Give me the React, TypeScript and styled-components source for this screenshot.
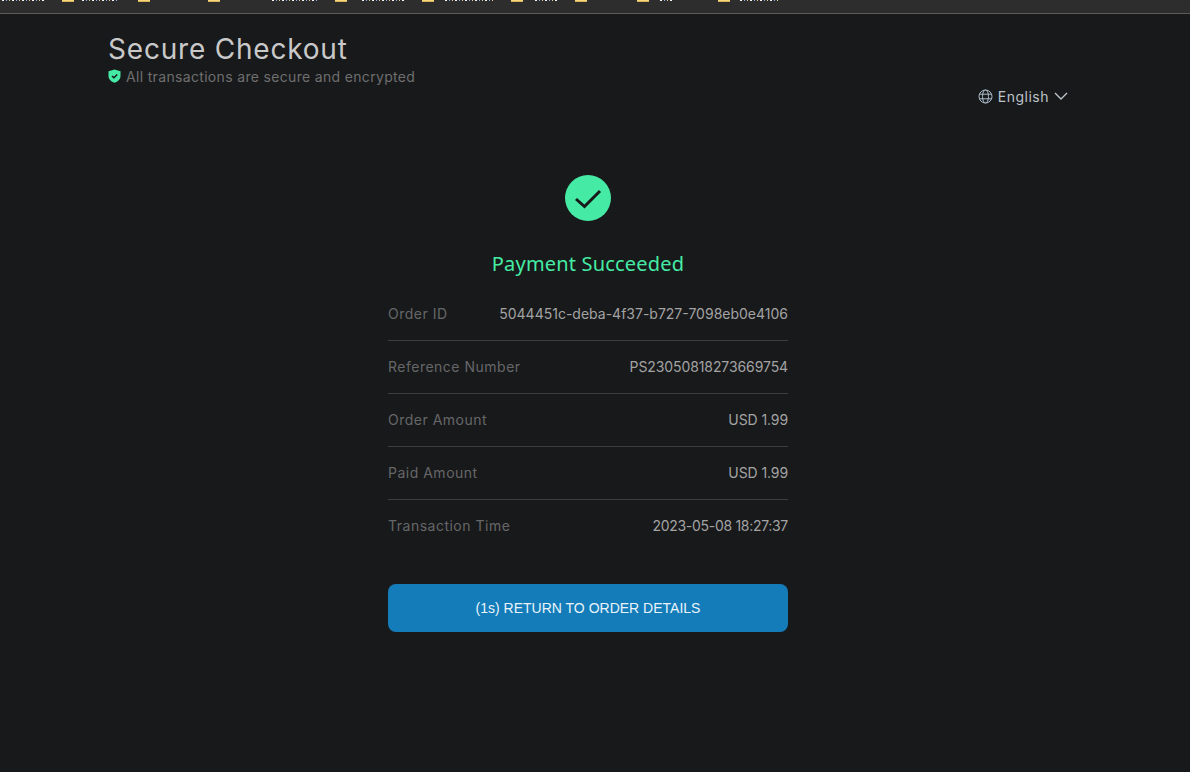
import styled, { createGlobalStyle } from "styled-components";

const GlobalStyle = createGlobalStyle`
	html, body {
		margin: 0;
		padding: 0;
		background: #18191b;
	}
	body {
		font-family: Inter, "Liberation Sans", sans-serif;
	}
`;

const Page = styled.div`
	display: flex;
	flex-direction: column;
	width: 1190px;
	height: 772px;
	overflow: hidden;
	background: #18191b;
`;

const BookmarkBar = styled.div`
	display: flex;
	flex-shrink: 0;
	box-sizing: border-box;
	height: 14px;
	background: #2d2d2d;
	border-bottom: 1px solid #5c5c5c;
`;

const Folder = styled.div<{ $left: number }>`
	width: 12px;
	height: 2px;
	margin-left: ${({ $left }) => $left}px;
	background: #f6d77e;
	border-bottom: 1px solid #d9b45c;
	box-sizing: border-box;
`;

const LabelSliver = styled.div<{ $left: number; $width: number }>`
	width: ${({ $width }) => $width}px;
	height: 1px;
	margin-left: ${({ $left }) => $left}px;
	background: repeating-linear-gradient(90deg, #f4f4f4 0 2px, #2d2d2d 2px 4px, #8fb4e0 4px 5px, #2d2d2d 5px 7px, #e8c9a0 7px 8px, #2d2d2d 8px 10px);
`;

const Content = styled.div`
	display: flex;
	flex-direction: column;
	width: 960px;
	margin-left: 108px;
`;

const Header = styled.header`
	display: flex;
	justify-content: space-between;
	align-items: flex-end;
	height: 92px;
`;

const HeaderText = styled.div`
	display: flex;
	flex-direction: column;
	align-self: flex-start;
	margin-top: 18px;
`;

const Title = styled.h1`
	margin: 0;
	font-size: 28px;
	line-height: 34px;
	font-weight: 400;
	letter-spacing: 0.8px;
	color: #c9c9c9;
`;

const SecureNote = styled.div`
	display: flex;
	align-items: center;
	gap: 5px;
	height: 18px;
	margin-top: 1px;
	font-size: 14px;
	letter-spacing: 0.33px;
	color: #6f6f6f;
`;

const LanguageButton = styled.div`
	display: flex;
	align-items: center;
	gap: 5px;
	height: 20px;
	font-size: 14px;
	letter-spacing: 0.5px;
	color: #bcc3c9;
`;

const Main = styled.main`
	display: flex;
	flex-direction: column;
	align-items: center;
	padding-top: 69px;
`;

const SuccessBadge = styled.div`
	display: flex;
	align-items: center;
	justify-content: center;
	width: 46px;
	height: 46px;
	border-radius: 50%;
	background: #45eba5;
`;

const Status = styled.h2`
	margin: 28px 0 0;
	font-family: "Noto Sans", "Open Sans", sans-serif;
	font-size: 20px;
	line-height: 30px;
	font-weight: 400;
	letter-spacing: 0.18px;
	color: #45eba5;
`;

const Details = styled.div`
	display: flex;
	flex-direction: column;
	width: 400px;
	margin-top: 9px;
`;

const Row = styled.div`
	display: flex;
	justify-content: space-between;
	align-items: center;
	box-sizing: border-box;
	height: 53px;
	padding-bottom: 2px;
	font-size: 14px;
	border-bottom: 1px solid #3c3d3f;

	&:last-child {
		height: 52px;
		border-bottom: none;
	}
`;

const RowLabel = styled.span`
	letter-spacing: 0.5px;
	color: #666768;
`;

const RowValue = styled.span<{ $tracking: number }>`
	letter-spacing: ${({ $tracking }) => $tracking}px;
	color: #a3a3a3;
`;

const ReturnButton = styled.button`
	width: 400px;
	height: 48px;
	margin-top: 32px;
	padding: 0;
	border: none;
	border-radius: 8px;
	background: #137cb9;
	font-family: "Liberation Sans", Arial, sans-serif;
	font-size: 14px;
	color: #e9f3f9;
	cursor: pointer;
`;

const bookmarkBits = [
	{ kind: "label", left: 2, width: 42 },
	{ kind: "folder", left: 18 },
	{ kind: "label", left: 8, width: 36 },
	{ kind: "folder", left: 20 },
	{ kind: "folder", left: 58 },
	{ kind: "label", left: 52, width: 45 },
	{ kind: "folder", left: 18 },
	{ kind: "label", left: 15, width: 43 },
	{ kind: "folder", left: 17 },
	{ kind: "label", left: 11, width: 48 },
	{ kind: "folder", left: 18 },
	{ kind: "label", left: 12, width: 22 },
	{ kind: "folder", left: 18 },
	{ kind: "folder", left: 50 },
	{ kind: "label", left: 11, width: 12 },
	{ kind: "folder", left: 46 },
	{ kind: "label", left: 10, width: 38 },
];

const details = [
	{ label: "Order ID", value: "5044451c-deba-4f37-b727-7098eb0e4106", tracking: 0 },
	{ label: "Reference Number", value: "PS23050818273669754", tracking: -0.1 },
	{ label: "Order Amount", value: "USD 1.99", tracking: -0.1 },
	{ label: "Paid Amount", value: "USD 1.99", tracking: -0.1 },
	{ label: "Transaction Time", value: "2023-05-08 18:27:37", tracking: -0.3 },
];

export default function App() {
	return (
		<Page>
			<GlobalStyle />
			<BookmarkBar>
				{bookmarkBits.map((bit, index) =>
					bit.kind === "folder" ? (
						<Folder key={index} $left={bit.left} />
					) : (
						<LabelSliver key={index} $left={bit.left} $width={bit.width ?? 0} />
					),
				)}
			</BookmarkBar>
			<Content>
				<Header>
					<HeaderText>
						<Title>Secure Checkout</Title>
						<SecureNote>
							<svg width="13" height="14" viewBox="0 0 13 14">
								<path d="M6.5 0.5 L12.5 2.3 V7 C12.5 10.2 10 12.5 6.5 13.8 C3 12.5 0.5 10.2 0.5 7 V2.3 Z" fill="#45eba5" />
								<path d="M4 7 L5.9 8.8 L9.2 5.4" fill="none" stroke="#18191b" strokeWidth="1.4" />
							</svg>
							All transactions are secure and encrypted
						</SecureNote>
					</HeaderText>
					<LanguageButton>
						<svg width="15" height="15" viewBox="0 0 15 15" fill="none" stroke="#a9b8c6" strokeWidth="1">
							<circle cx="7.5" cy="7.5" r="6.5" />
							<ellipse cx="7.5" cy="7.5" rx="3" ry="6.5" />
							<path d="M1.4 5.2 H13.6 M1.4 9.8 H13.6" />
						</svg>
						English
						<svg width="14" height="14" viewBox="0 0 14 14" fill="none" stroke="#bcc3c9" strokeWidth="1.4">
							<path d="M1 4 L7 10 L13 4" />
						</svg>
					</LanguageButton>
				</Header>
				<Main>
					<SuccessBadge>
						<svg width="30" height="22" viewBox="0 0 30 22" fill="none" stroke="#18191b" strokeWidth="3">
							<path d="M3 12 L11.5 19.5 L27 4" />
						</svg>
					</SuccessBadge>
					<Status>Payment Succeeded</Status>
					<Details>
						{details.map((item) => (
							<Row key={item.label}>
								<RowLabel>{item.label}</RowLabel>
								<RowValue $tracking={item.tracking}>{item.value}</RowValue>
							</Row>
						))}
					</Details>
					<ReturnButton>(1s) RETURN TO ORDER DETAILS</ReturnButton>
				</Main>
			</Content>
		</Page>
	);
}
